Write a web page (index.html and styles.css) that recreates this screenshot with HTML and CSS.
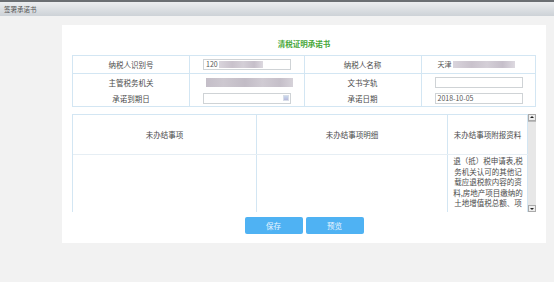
FILE: index.html
```html
<!DOCTYPE html>
<html lang="zh-CN">
<head>
    <meta charset="UTF-8">
    <title>签署承诺书</title>
    <link rel="stylesheet" href="styles.css">
</head>
<body>
    <div class="topbar">签署承诺书</div>

    <div class="panel">
        <h1 class="title">清税证明承诺书</h1>

        <table class="info">
            <tr class="first">
                <td class="label">纳税人识别号</td>
                <td class="value"><div class="field">120<span class="blur w44"></span></div></td>
                <td class="label">纳税人名称</td>
                <td class="value"><div class="field plain">天津<span class="blur w62"></span></div></td>
            </tr>
            <tr>
                <td class="label">主管税务机关</td>
                <td class="value"><div class="blur-bar"></div></td>
                <td class="label">文书字轨</td>
                <td class="value"><div class="field"></div></td>
            </tr>
            <tr>
                <td class="label">承诺到期日</td>
                <td class="value"><div class="field date"><span class="picker"></span></div></td>
                <td class="label">承诺日期</td>
                <td class="value"><div class="field">2018-10-05</div></td>
            </tr>
        </table>

        <div class="items">
            <div class="items-view">
                <table class="items-table">
                    <tr class="head">
                        <th class="c1">未办结事项</th>
                        <th class="c2">未办结事项明细</th>
                        <th class="c3">未办结事项附报资料</th>
                    </tr>
                    <tr>
                        <td></td>
                        <td></td>
                        <td class="docs">退（抵）税申请表,税务机关认可的其他记载应退税款内容的资料,房地产项目缴纳的土地增值税总额、项</td>
                    </tr>
                </table>
            </div>
            <div class="scrollbar">
                <span class="arrow up"></span>
                <span class="track"></span>
                <span class="arrow down"></span>
            </div>
        </div>

        <div class="actions">
            <button class="btn">保存</button>
            <button class="btn">预览</button>
        </div>
    </div>
</body>
</html>
```

FILE: styles.css
```css
:root {
    --bg-color: #f2f2f2;
    --line-color: #d3e6f3;
    --text-color: #4a4a4a;
    --btn-color: #4fb2f3;
}

body {
    margin: 0;
    background-color: var(--bg-color);
    font-family: "Noto Sans CJK SC", "DejaVu Sans", sans-serif;
    color: var(--text-color);
    font-size: 7.5px;
}

.topbar {
    height: 14px;
    line-height: 14px;
    border-top: 2px solid #6b6f73;
    padding-left: 4px;
    font-size: 6.5px;
    color: #555;
    background: linear-gradient(#eceef0, #cdd2d7);
}

.panel {
    width: 484px;
    height: 218px;
    margin: 9px 0 0 62px;
    background-color: #fff;
    box-sizing: border-box;
    padding-top: 13px;
}

.title {
    margin: 0 0 6px;
    height: 11px;
    line-height: 11px;
    text-align: center;
    font-size: 7.5px;
    font-weight: bold;
    color: #45a636;
}

.info {
    width: 464px;
    margin: 0 10px;
    border-collapse: collapse;
    border: 1px solid var(--line-color);
    table-layout: fixed;
}

.info td {
    height: 16px;
    padding: 0;
    border-left: 1px solid var(--line-color);
}

.info .first td {
    height: 17px;
    border-bottom: 1px solid var(--line-color);
}

.info td.label {
    width: 116px;
    text-align: center;
}

.info td.value {
    padding-left: 13px;
}

.field {
    position: relative;
    width: 84px;
    height: 9px;
    line-height: 9px;
    padding-left: 2px;
    border: 1px solid #cfd3d6;
    font-size: 7px;
    color: #555;
    display: flex;
    align-items: center;
}

.field.plain {
    border-color: #fff;
}

.blur {
    display: inline-block;
    height: 7px;
    background: linear-gradient(90deg, #d9d4dc, #c9c2cc 30%, #d4cfd7 55%, #c6bfca 80%, #ddd9e0);
}

.w44 { width: 44px; margin-left: 1px; }
.w62 { width: 62px; margin-left: 1px; }

.blur-bar {
    width: 87px;
    height: 9px;
    margin-left: 3px;
    background: linear-gradient(90deg, #c4bec8, #cdc8d0 20%, #c2bcc6 45%, #d0cbd3 65%, #c5bfc9 85%, #d6d2d9);
}

.picker {
    position: absolute;
    right: 1px;
    top: 1px;
    width: 6px;
    height: 6px;
    background: linear-gradient(#c9d9ec, #b8b9dc);
    border: 1px solid #d8dde8;
    box-sizing: border-box;
}

.items {
    display: flex;
    width: 464px;
    height: 98px;
    margin: 7px 10px 0;
}

.items-view {
    flex: 1;
    overflow: hidden;
    border-top: 1px solid var(--line-color);
    border-left: 1px solid var(--line-color);
}

.items-table {
    width: 100%;
    border-collapse: collapse;
    table-layout: fixed;
}

.items-table th,
.items-table td {
    padding: 0;
    border-right: 1px solid var(--line-color);
    font-weight: normal;
    text-align: center;
}

.items-table .head th {
    height: 39px;
    border-bottom: 1px solid #e6eef4;
}

.items-table .c1 { width: 183px; }
.items-table .c2 { width: 190px; }

.items-table td {
    height: 120px;
    vertical-align: top;
}

.items-table td.docs {
    padding: 1px 3px 0 4px;
    line-height: 10.5px;
    word-break: break-all;
}

.scrollbar {
    width: 8px;
    display: flex;
    flex-direction: column;
    background-color: #e7e7e7;
}

.scrollbar .arrow {
    height: 7px;
    background-color: #eee;
    border: 1px solid #aaa;
    box-sizing: border-box;
    position: relative;
}

.scrollbar .arrow::after {
    content: "";
    position: absolute;
    left: 1px;
    border-left: 2px solid transparent;
    border-right: 2px solid transparent;
}

.scrollbar .up::after {
    top: 1px;
    border-bottom: 2px solid #222;
}

.scrollbar .down::after {
    top: 2px;
    border-top: 2px solid #222;
}

.scrollbar .track {
    flex: 1;
    border-top: 1px solid #bbb;
}

.actions {
    display: flex;
    justify-content: center;
    gap: 3px;
    margin-top: 5px;
}

.btn {
    width: 58px;
    height: 17px;
    padding: 0;
    border: none;
    border-radius: 2px;
    background-color: var(--btn-color);
    color: #e8f5ff;
    font-family: inherit;
    font-size: 7.5px;
    cursor: pointer;
}
```
